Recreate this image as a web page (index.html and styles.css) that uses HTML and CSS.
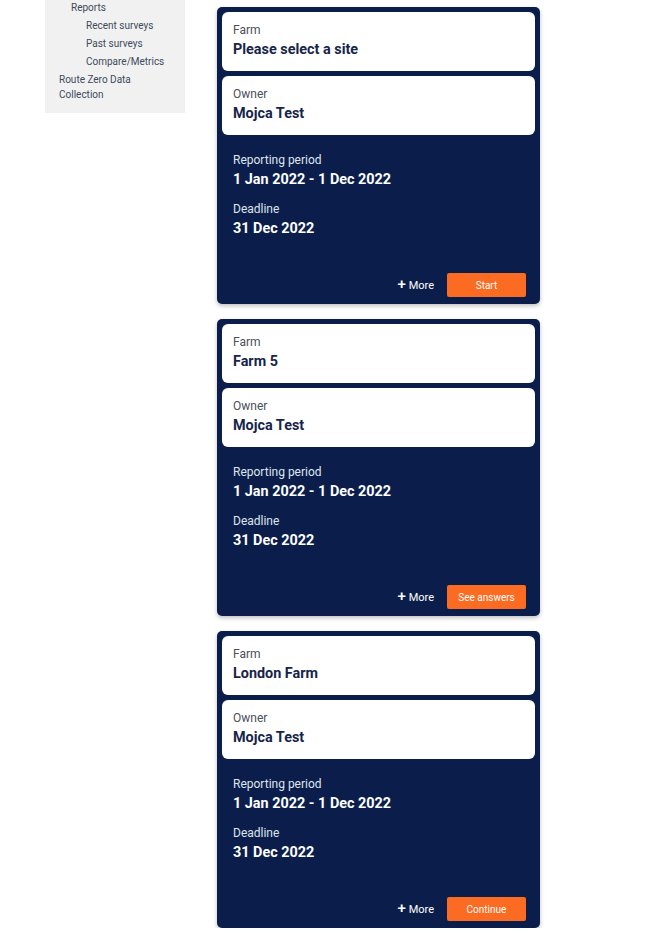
FILE: index.html
```html
<!DOCTYPE html>
<html lang="en">
<head>
  <meta charset="UTF-8" />
  <meta name="viewport" content="width=device-width, initial-scale=1.0"/>
  <title>Surveys</title>
  <link rel="stylesheet" href="styles.css">
</head>
<body>
  <div class="layout">
    <nav class="sidebar">
      <a class="nav-item level-1">Reports</a>
      <a class="nav-item level-2">Recent surveys</a>
      <a class="nav-item level-2">Past surveys</a>
      <a class="nav-item level-2">Compare/Metrics</a>
      <a class="nav-item level-0">Route Zero Data Collection</a>
    </nav>

    <main class="survey-list">
      <div class="survey-card">
        <div class="info-box">
          <div class="label">Farm</div>
          <div class="value">Please select a site</div>
        </div>
        <div class="info-box">
          <div class="label">Owner</div>
          <div class="value">Mojca Test</div>
        </div>
        <div class="details">
          <div class="detail">
            <div class="label">Reporting period</div>
            <div class="value">1 Jan 2022 - 1 Dec 2022</div>
          </div>
          <div class="detail">
            <div class="label">Deadline</div>
            <div class="value">31 Dec 2022</div>
          </div>
        </div>
        <div class="actions">
          <span class="more"><span class="plus">+</span> More</span>
          <button class="btn">Start</button>
        </div>
      </div>

      <div class="survey-card">
        <div class="info-box">
          <div class="label">Farm</div>
          <div class="value">Farm 5</div>
        </div>
        <div class="info-box">
          <div class="label">Owner</div>
          <div class="value">Mojca Test</div>
        </div>
        <div class="details">
          <div class="detail">
            <div class="label">Reporting period</div>
            <div class="value">1 Jan 2022 - 1 Dec 2022</div>
          </div>
          <div class="detail">
            <div class="label">Deadline</div>
            <div class="value">31 Dec 2022</div>
          </div>
        </div>
        <div class="actions">
          <span class="more"><span class="plus">+</span> More</span>
          <button class="btn">See answers</button>
        </div>
      </div>

      <div class="survey-card">
        <div class="info-box">
          <div class="label">Farm</div>
          <div class="value">London Farm</div>
        </div>
        <div class="info-box">
          <div class="label">Owner</div>
          <div class="value">Mojca Test</div>
        </div>
        <div class="details">
          <div class="detail">
            <div class="label">Reporting period</div>
            <div class="value">1 Jan 2022 - 1 Dec 2022</div>
          </div>
          <div class="detail">
            <div class="label">Deadline</div>
            <div class="value">31 Dec 2022</div>
          </div>
        </div>
        <div class="actions">
          <span class="more"><span class="plus">+</span> More</span>
          <button class="btn">Continue</button>
        </div>
      </div>
    </main>
  </div>
</body>
</html>
```

FILE: styles.css
```css
body {
  margin: 0;
  background: #fff;
  font-family: Roboto, "Noto Sans", Arial, sans-serif;
}
.layout {
  display: flex;
  align-items: flex-start;
}
.sidebar {
  width: 140px;
  margin-left: 45px;
  margin-top: -1px;
  padding: 0 20px 11px 14px;
  box-sizing: border-box;
  background: #f1f1f1;
  display: flex;
  flex-direction: column;
}
.nav-item {
  font-size: 10px;
  line-height: 18px;
  color: #3d4a5c;
}
.level-1 {
  padding-left: 12px;
}
.level-2 {
  padding-left: 27px;
}
.level-0 {
  line-height: 15px;
  margin-top: 1px;
}
.survey-list {
  margin-left: 32px;
  padding-top: 7px;
  width: 323px;
  display: flex;
  flex-direction: column;
  gap: 15px;
}
.survey-card {
  background: #0b1e4b;
  border-radius: 5px;
  padding: 5px;
  box-shadow: 0 2px 4px rgba(0, 0, 0, 0.25);
  display: flex;
  flex-direction: column;
  gap: 5px;
}
.info-box {
  background: #fff;
  border-radius: 6px;
  padding: 10px 11px 11px;
}
.label {
  font-size: 12px;
  line-height: 16px;
  color: #4a4f5a;
}
.value {
  margin-top: 2px;
  font-size: 14.4px;
  line-height: 20px;
  font-weight: 700;
  color: #16244a;
}
.details {
  padding: 12px 11px 0;
  display: flex;
  flex-direction: column;
  gap: 11px;
}
.details .label {
  color: #dfe4ef;
}
.details .value {
  margin-top: 2px;
  color: #fff;
}
.actions {
  margin-top: 29px;
  margin-bottom: 2px;
  padding-right: 9px;
  display: flex;
  justify-content: flex-end;
  align-items: center;
  gap: 13px;
}
.more {
  font-size: 11px;
  line-height: 14px;
  color: #fff;
}
.plus {
  font-size: 15px;
  font-weight: 500;
}
.btn {
  width: 79px;
  height: 24px;
  border: none;
  border-radius: 2px;
  background: #fb6b21;
  color: #fff;
  font-family: Roboto, "Noto Sans", Arial, sans-serif;
  font-size: 10px;
}
```
